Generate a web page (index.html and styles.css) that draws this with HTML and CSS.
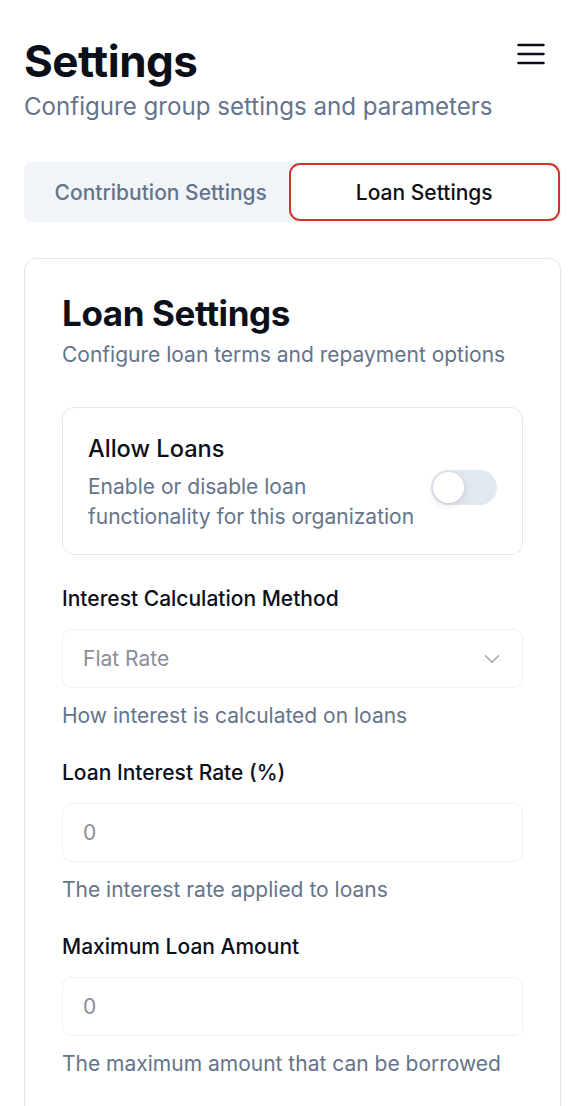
FILE: index.html
```html
<!DOCTYPE html>
<html lang="en">
<head>
  <meta charset="UTF-8">
  <meta name="viewport" content="width=device-width, initial-scale=1.0">
  <title>Settings</title>
  <link rel="stylesheet" href="styles.css">
</head>
<body>

  <div class="page">
    <div class="header">
      <div>
        <h1 class="page-title">Settings</h1>
        <p class="page-subtitle">Configure group settings and parameters</p>
      </div>
      <button class="menu-button" aria-label="Menu">
        <svg width="28" height="22" viewBox="0 0 28 22" fill="none" stroke="#0b0f1a" stroke-width="2.5" stroke-linecap="round">
          <line x1="1.5" y1="2" x2="26.5" y2="2"/>
          <line x1="1.5" y1="11" x2="26.5" y2="11"/>
          <line x1="1.5" y1="20" x2="26.5" y2="20"/>
        </svg>
      </button>
    </div>

    <div class="tabs">
      <button class="tab">Contribution Settings</button>
      <button class="tab active">Loan Settings</button>
    </div>

    <div class="card">
      <h2 class="card-title">Loan Settings</h2>
      <p class="card-subtitle">Configure loan terms and repayment options</p>

      <div class="switch-box">
        <div class="switch-text">
          <div class="switch-title">Allow Loans</div>
          <div class="switch-desc">Enable or disable loan functionality for this organization</div>
        </div>
        <div class="switch"><span class="switch-thumb"></span></div>
      </div>

      <div class="field">
        <label class="field-label">Interest Calculation Method</label>
        <div class="select">
          <span>Flat Rate</span>
          <svg width="26" height="26" viewBox="0 0 24 24" fill="none" stroke="#a3a8b0" stroke-width="1.5" stroke-linecap="round" stroke-linejoin="round">
            <path d="M6 9l6 6 6-6"/>
          </svg>
        </div>
        <p class="field-help">How interest is calculated on loans</p>
      </div>

      <div class="field">
        <label class="field-label">Loan Interest Rate (%)</label>
        <input class="input" type="text" value="0">
        <p class="field-help">The interest rate applied to loans</p>
      </div>

      <div class="field">
        <label class="field-label">Maximum Loan Amount</label>
        <input class="input" type="text" value="0">
        <p class="field-help">The maximum amount that can be borrowed</p>
      </div>
    </div>
  </div>

</body>
</html>
```

FILE: styles.css
```css
body {
  margin: 0;
  padding: 0;
  font-family: Inter, "Noto Sans", sans-serif;
  color: #0b0f1a;
  background: #ffffff;
}

.page {
  padding: 36px 25px 40px 24px;
}

.header {
  display: flex;
  justify-content: space-between;
  align-items: flex-start;
}

.page-title {
  margin: 0;
  font-size: 44px;
  line-height: 50px;
  font-weight: 700;
  letter-spacing: -0.5px;
}

.page-subtitle {
  margin: 6px 0 0;
  font-size: 24.1px;
  line-height: 30px;
  color: #64748b;
}

.menu-button {
  background: none;
  border: none;
  padding: 0;
  margin: 7px 16px 0 0;
  cursor: pointer;
}

.tabs {
  margin-top: 40px;
  display: grid;
  grid-template-columns: 1fr 1fr;
  background: #f1f5f9;
  border-radius: 8px;
  padding: 5px;
  height: 60px;
  box-sizing: border-box;
}

.tab {
  font-family: inherit;
  font-size: 21px;
  font-weight: 500;
  color: #64748b;
  background: none;
  border: none;
  border-radius: 7px;
  cursor: pointer;
}

.tab.active {
  background: #ffffff;
  color: #0b0f1a;
  box-shadow: 0 0 0 2px #ffffff, 0 0 0 4px #d0352b;
}

.card {
  margin-top: 36px;
  border: 1px solid #e2e8f0;
  border-radius: 12px;
  padding: 30px 37px 40px 37px;
}

.card-title {
  margin: 0;
  font-size: 35px;
  line-height: 48px;
  font-weight: 700;
  letter-spacing: -0.4px;
}

.card-subtitle {
  margin: 4px 0 0;
  font-size: 21px;
  line-height: 28px;
  color: #64748b;
}

.switch-box {
  margin-top: 38px;
  border: 1px solid #e2e8f0;
  border-radius: 12px;
  padding: 25px 25px 22px 25px;
  display: flex;
  align-items: center;
  gap: 12px;
}

.switch-text {
  flex: 1;
}

.switch-title {
  font-size: 23.6px;
  line-height: 32px;
  font-weight: 500;
}

.switch-desc {
  margin-top: 7px;
  font-size: 21px;
  line-height: 30px;
  color: #64748b;
}

.switch {
  width: 66px;
  height: 35px;
  border-radius: 18px;
  background: #e2e8f0;
  margin-top: 10px;
  padding: 2px;
  box-sizing: border-box;
  flex-shrink: 0;
}

.switch-thumb {
  display: block;
  width: 31px;
  height: 31px;
  border-radius: 50%;
  background: #ffffff;
  box-shadow: 0 2px 6px rgba(15, 23, 42, 0.15);
}

.field {
  margin-top: 30px;
}

.field + .field {
  margin-top: 29px;
}

.field-label {
  display: block;
  font-size: 21px;
  line-height: 28px;
  font-weight: 500;
}

.select,
.input {
  margin-top: 16px;
  height: 59px;
  box-sizing: border-box;
  width: 100%;
  border: 1px solid #eef1f5;
  border-radius: 9px;
  padding: 0 20px;
  font-family: inherit;
  font-size: 21px;
  color: #8a8f98;
  background: #ffffff;
}

.select {
  display: flex;
  align-items: center;
  justify-content: space-between;
  padding-right: 17px;
}

.input {
  display: block;
  outline: none;
}

.field-help {
  margin: 14px 0 0;
  font-size: 21px;
  line-height: 28px;
  color: #64748b;
}
```
